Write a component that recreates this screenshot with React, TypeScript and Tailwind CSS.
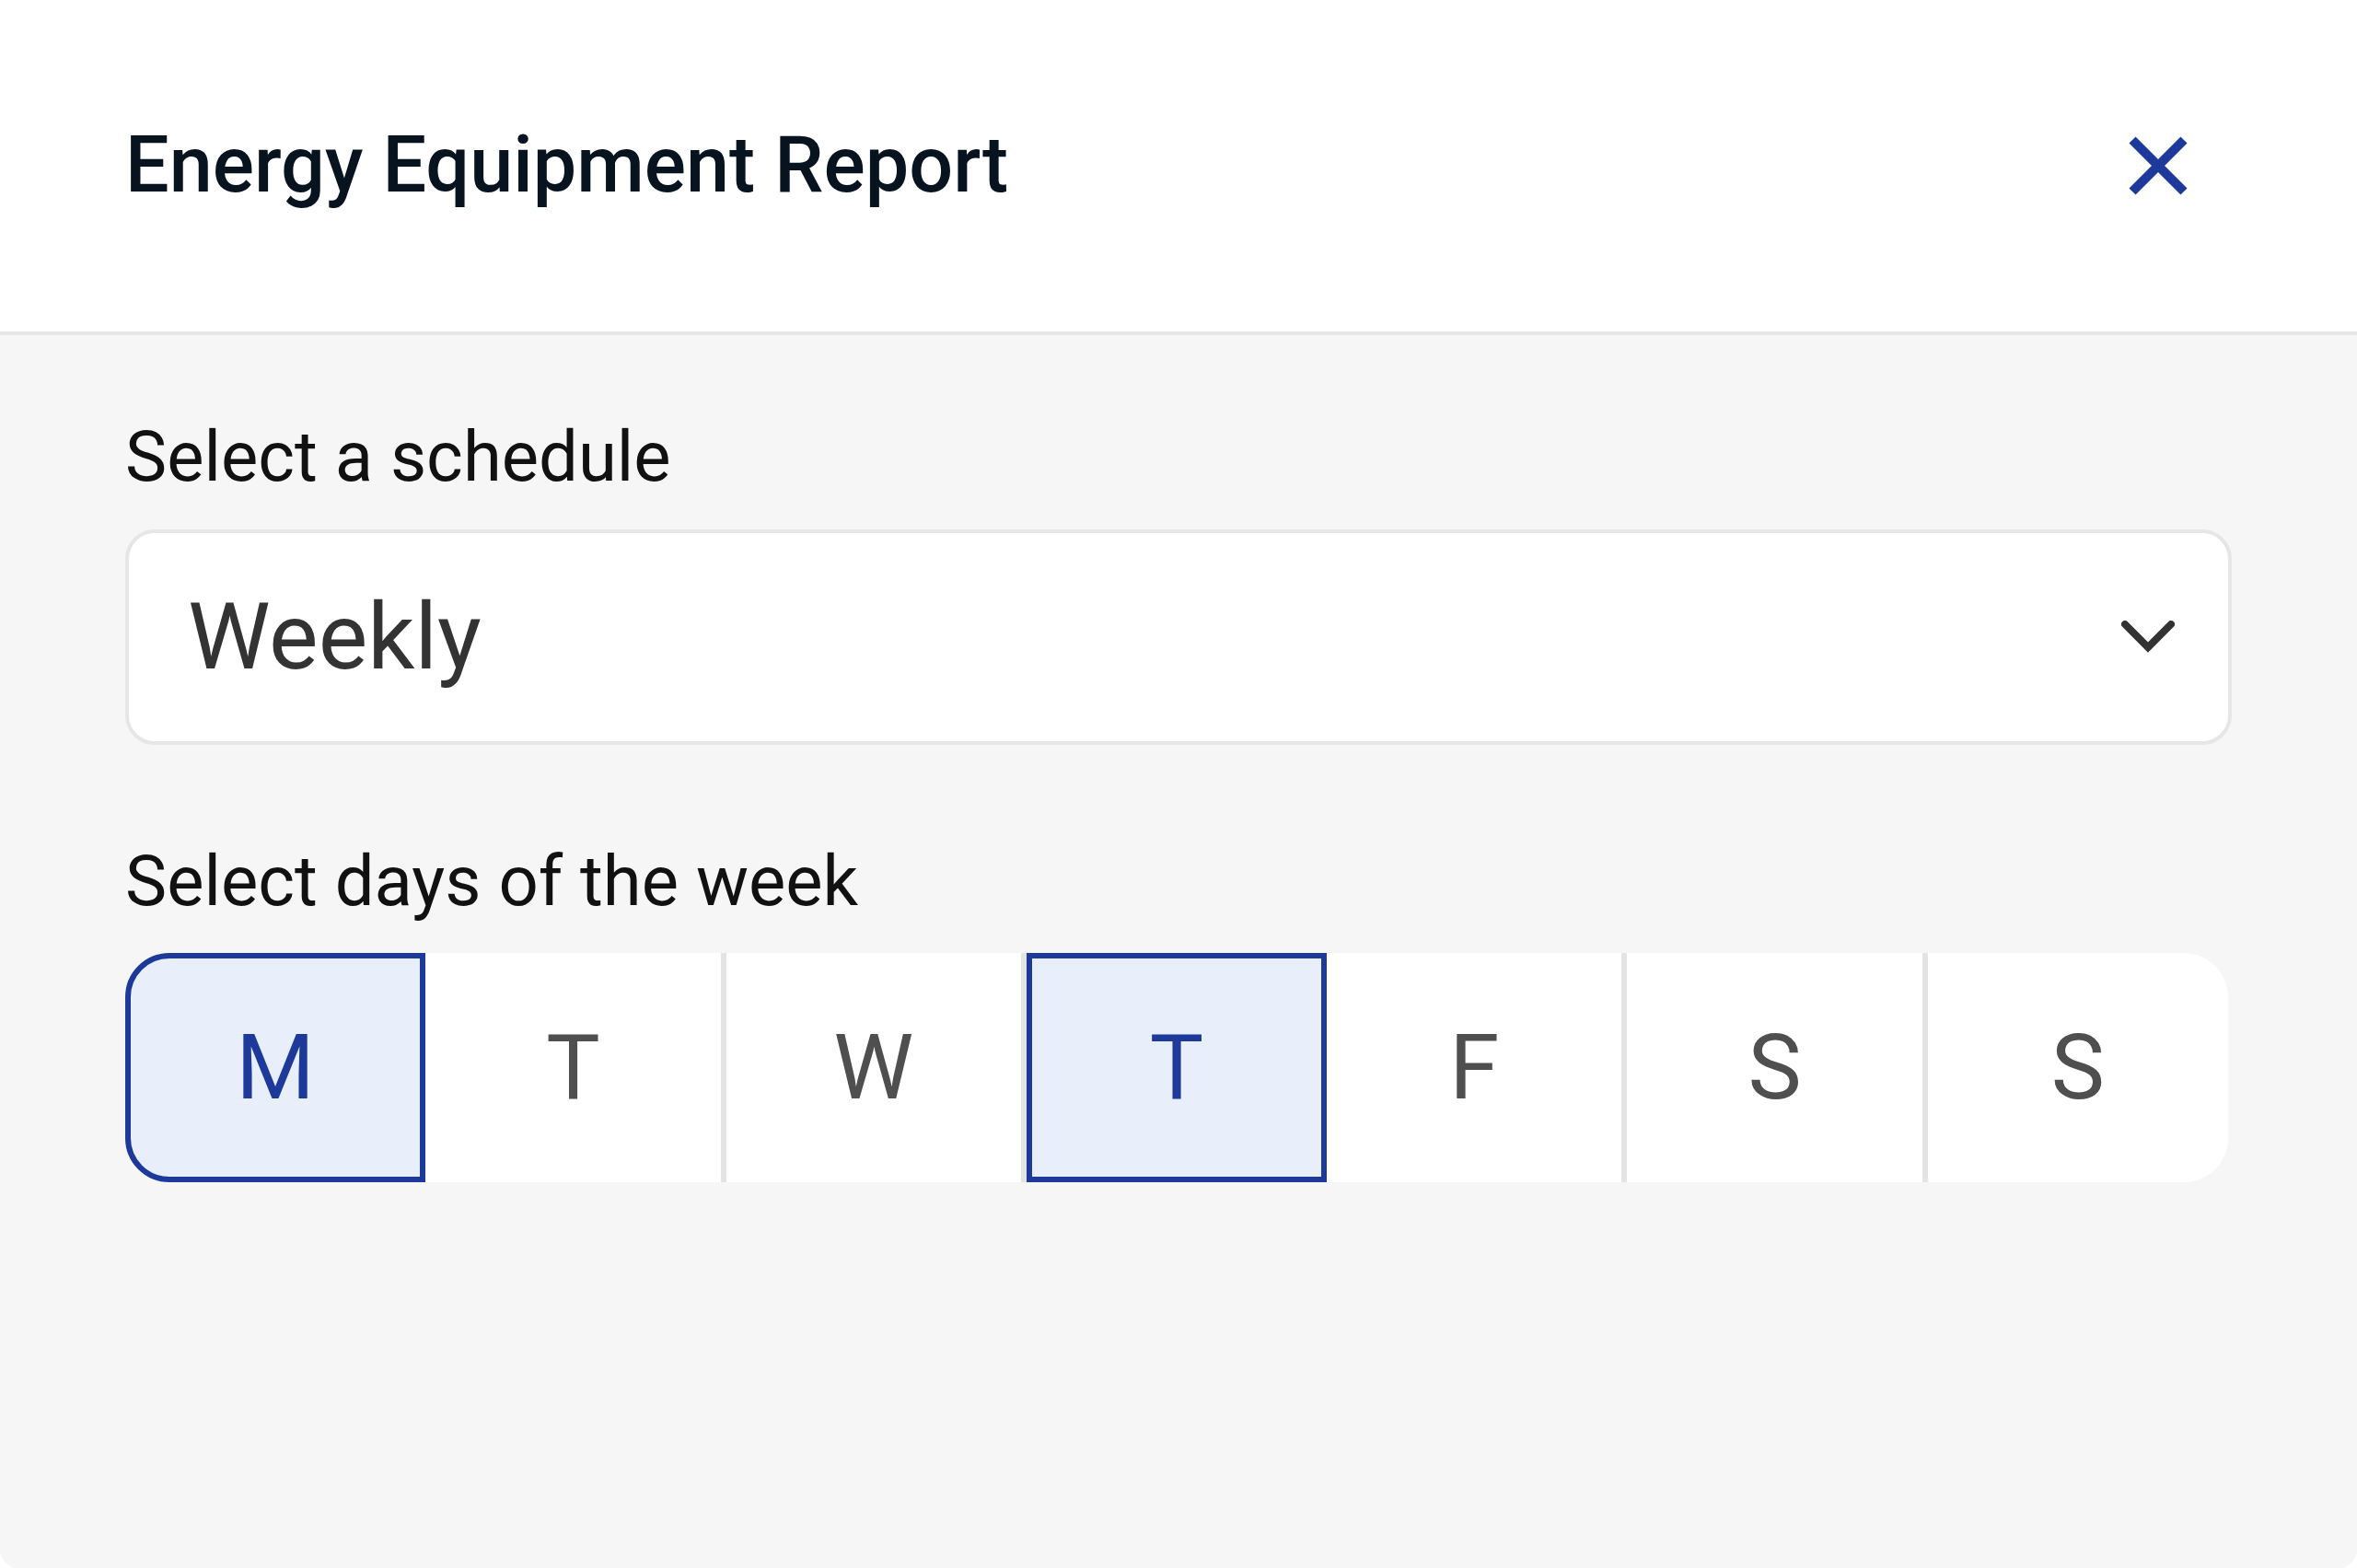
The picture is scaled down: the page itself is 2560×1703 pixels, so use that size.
const days = [
  { key: "mon", label: "M", on: true },
  { key: "tue", label: "T", on: false },
  { key: "wed", label: "W", on: false },
  { key: "thu", label: "T", on: true },
  { key: "fri", label: "F", on: false },
  { key: "sat", label: "S", on: false },
  { key: "sun", label: "S", on: false },
];

export default function App() {
  return (
    <div className="w-[2560px] h-[1703px] bg-white font-['Roboto','Liberation_Sans',sans-serif]">
      <div className="flex flex-col h-full bg-[#f6f6f6] rounded-b-[20px] overflow-hidden">
        <header className="h-[364px] shrink-0 flex flex-row items-center justify-between bg-white border-b-4 border-[#e6e6e6] pl-[136px] pr-[184px]">
          <h1 className="text-[84.5px] leading-[98px] font-medium text-[#07131e]">
            Energy Equipment Report
          </h1>
          <button className="w-[64px] h-[64px] flex items-center justify-center">
            <svg width="64" height="64" viewBox="0 0 64 64">
              <path
                d="M4 4 L60 60 M60 4 L4 60"
                stroke="#1d3a9b"
                strokeWidth="10"
                fill="none"
              />
            </svg>
          </button>
        </header>

        <main className="flex flex-col px-[136px] pt-[86px]">
          <label className="text-[76px] leading-[92px] text-[#111111]">
            Select a schedule
          </label>
          <div className="mt-[33px] h-[234px] flex flex-row items-center justify-between bg-white border-4 border-[#e6e6e6] rounded-[32px] pl-[64px] pr-[58px]">
            <span className="text-[101px] leading-[122px] text-[#333333]">
              Weekly
            </span>
            <svg width="58" height="36" viewBox="0 0 58 36">
              <path
                d="M4 4 L29 29 L54 4"
                stroke="#333333"
                strokeWidth="8"
                strokeLinecap="round"
                fill="none"
              />
            </svg>
          </div>

          <label className="mt-[102px] text-[76px] leading-[92px] text-[#111111]">
            Select days of the week
          </label>
          <div className="mt-[32px] w-[2284px] h-[249px] grid grid-cols-7 bg-white rounded-[48px]">
            {days.map((d, i) => (
              <div
                key={d.key}
                className={`flex items-center justify-center text-[98px] leading-none ${
                  d.on
                    ? "bg-[#e8eefa] border-[6px] border-[#1d3a9b] text-[#1d3a9b]"
                    : i < days.length - 1
                    ? "border-r-[6px] border-[#e4e4e4] text-[#4f4f4f]"
                    : "text-[#4f4f4f]"
                } ${i === 0 ? "rounded-l-[48px]" : ""} ${
                  i === days.length - 1 ? "rounded-r-[48px]" : ""
                }`}
              >
                {d.label}
              </div>
            ))}
          </div>
        </main>
      </div>
    </div>
  );
}
